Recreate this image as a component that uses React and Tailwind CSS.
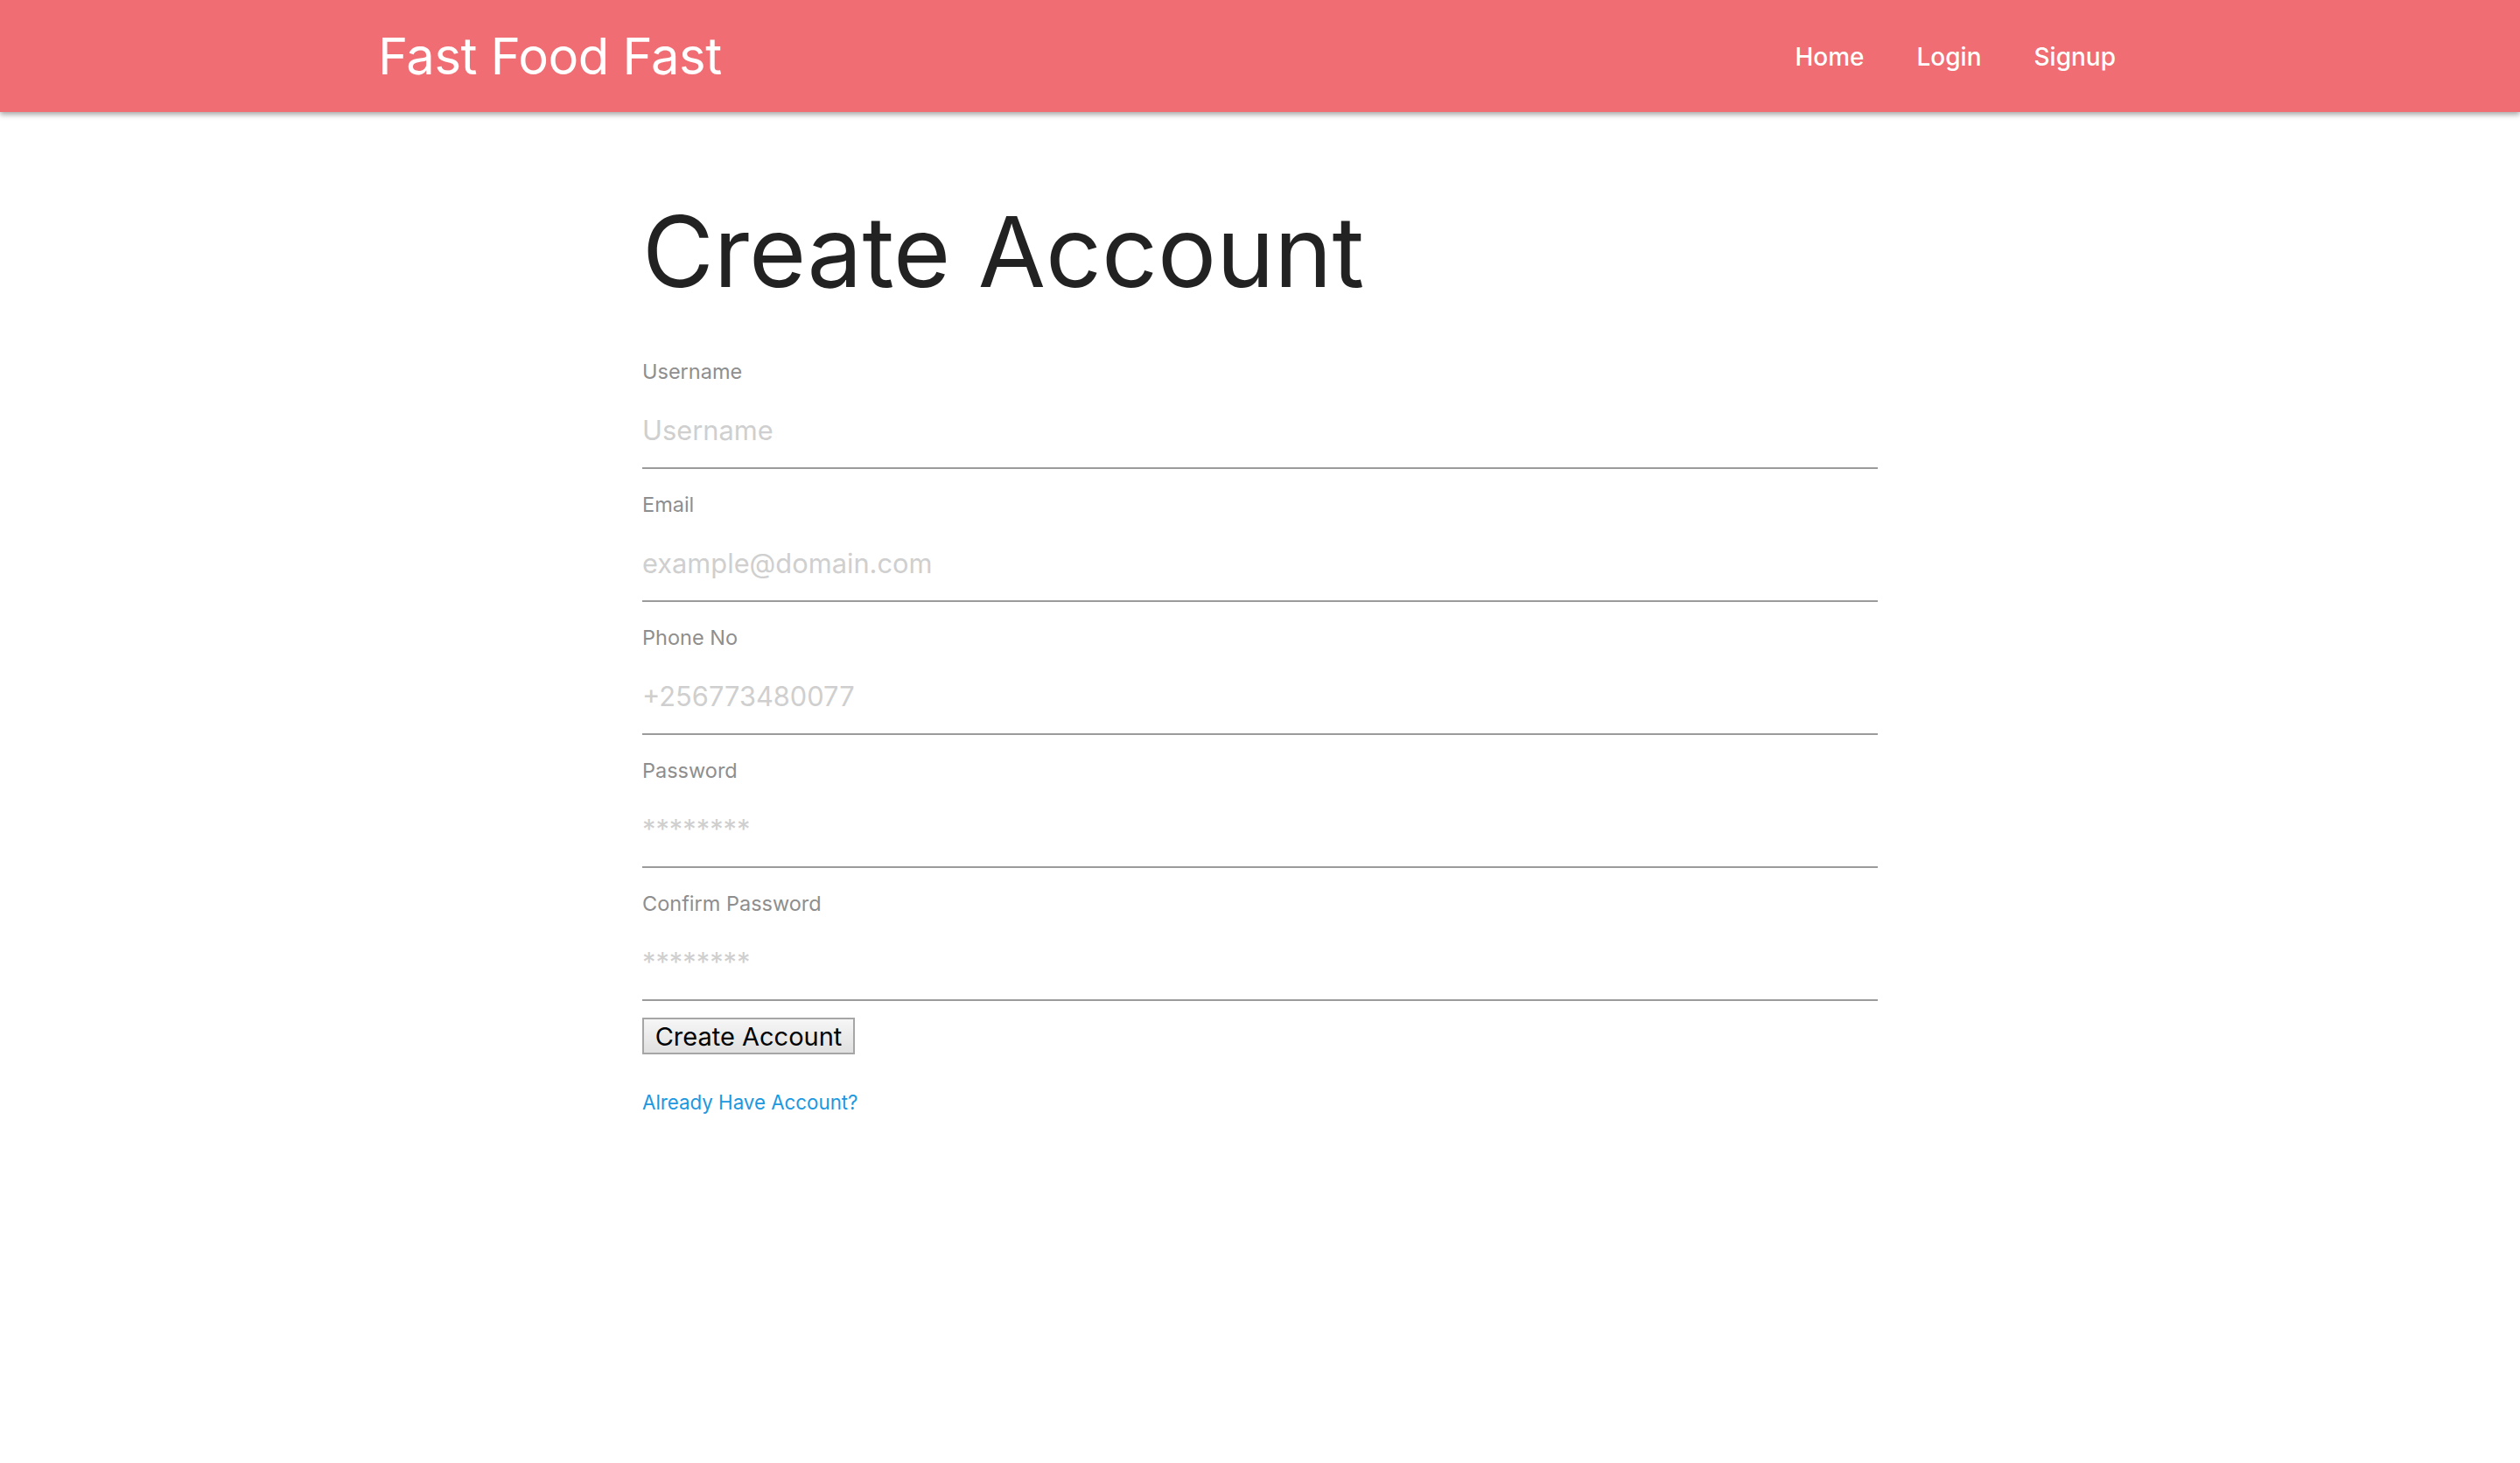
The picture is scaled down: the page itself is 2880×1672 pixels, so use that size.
import { useState } from "react";

const fields = [
  { label: "Username", type: "text", placeholder: "Username" },
  { label: "Email", type: "email", placeholder: "example@domain.com" },
  { label: "Phone No", type: "tel", placeholder: "+256773480077" },
  { label: "Password", type: "password", placeholder: "********" },
  { label: "Confirm Password", type: "password", placeholder: "********" },
];

function Navbar() {
  return (
    <nav className="h-[128px] bg-[#ef6d73] shadow-[0_3px_6px_rgba(0,0,0,0.35)] relative">
      <div className="w-[2016px] mx-auto h-full flex items-center justify-between">
        <a href="#" className="text-white text-[58px] font-normal tracking-[-0.5px]">
          Fast Food Fast
        </a>
        <ul className="flex items-center pt-[2px] text-white text-[28px] font-medium">
          <li><a href="#" className="px-[30px]">Home</a></li>
          <li><a href="#" className="px-[30px]">Login</a></li>
          <li><a href="#" className="px-[30px]">Signup</a></li>
        </ul>
      </div>
    </nav>
  );
}

function Field({ label, type, placeholder }) {
  const [value, setValue] = useState("");
  return (
    <div className="pt-[23px]">
      <label className="block h-[36px] text-[23.5px] leading-[36px] text-[#8e8e8e]">
        {label}
      </label>
      <input
        type={type}
        value={value}
        onChange={e => setValue(e.target.value)}
        placeholder={placeholder}
        className="block w-full h-[93px] pt-[5px] border-b-2 border-[#9b9b9b] bg-transparent outline-none text-[30.8px] text-[#222] placeholder:text-[#cfcfcf]"
      />
    </div>
  );
}

export default function App() {
  return (
    <div className="min-h-screen bg-white font-['Inter','Liberation_Sans',sans-serif]">
      <Navbar />
      <main className="w-[1412px] mx-auto pt-[87px]">
        <h1 className="text-[112px] leading-[144px] text-[#222] font-normal">
          Create Account
        </h1>
        <form className="mt-[25px]" onSubmit={e => e.preventDefault()}>
          {fields.map(f => (
            <Field key={f.label} {...f} />
          ))}
          <button
            type="submit"
            className="mt-[19px] block w-[243px] h-[42px] border-2 border-[#a6a6a6] bg-linear-to-b from-[#f6f6f6] to-[#e0e0e0] text-black text-[29px] leading-none"
          >
            Create Account
          </button>
        </form>
        <a href="#" className="block mt-[37px] text-[22.3px] leading-[36px] text-[#1b98e0]">
          Already Have Account?
        </a>
      </main>
    </div>
  );
}
